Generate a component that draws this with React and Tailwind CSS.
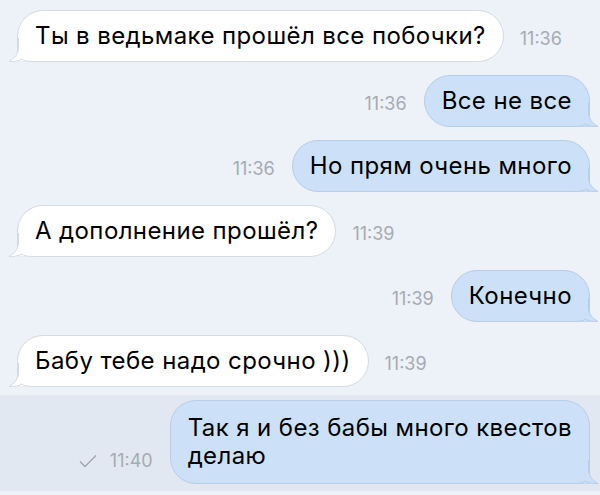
import React from "react";

const font = { fontFamily: 'Inter, "Liberation Sans", Arial, sans-serif' };

function Tail({ side }) {
    const incoming = side === "in";
    return (
        <svg
            width="30"
            height="24"
            viewBox="0 0 30 24"
            className={
                "absolute bottom-[-1px] pointer-events-none " +
                (incoming ? "left-[-10px]" : "right-[-10px] scale-x-[-1]")
            }
        >
            <path
                d="M10.5 0 L10.5 9 C10.5 16 6.5 20.5 1 23.5 L30 23.5 L30 0 Z"
                fill={incoming ? "#ffffff" : "#cce0f8"}
            />
            <path
                d="M10.5 0 L10.5 9 C10.5 16 6.5 20.5 1 23.5 C6 24 10 23 14 21 C16 23 19 23.5 30 23.5"
                fill="none"
                stroke={incoming ? "#d5dbe3" : "#b7cde8"}
                strokeWidth="1"
            />
        </svg>
    );
}

function Time({ t, check }) {
    return (
        <div className="mb-[13px] flex items-center gap-[12px] text-[18px] leading-[20px] text-[#a6abb3]">
            {check && (
                <svg width="20" height="16" viewBox="0 0 20 16">
                    <path d="M2 8.5 L7 13.5 L18 2.5" fill="none" stroke="#9fa5ad" strokeWidth="1.3" />
                </svg>
            )}
            <span>{t}</span>
        </div>
    );
}

function Incoming({ text, time }) {
    return (
        <div className="flex items-end gap-[16px] pl-[17px]">
            <div className="relative rounded-[26px] rounded-bl-none border border-[#d5dbe3] bg-white px-[17px] py-[12px] text-[24px] leading-[26px] tracking-[0.4px] text-black">
                <Tail side="in" />
                <span className="relative">{text}</span>
            </div>
            <Time t={time} />
        </div>
    );
}

function Outgoing({ lines, time, check }) {
    const multi = lines.length > 1;
    return (
        <div className="flex items-end justify-end gap-[17px] pr-[10px]">
            <Time t={time} check={check} />
            <div
                className={
                    "relative whitespace-nowrap rounded-[26px] rounded-br-none border border-[#b7cde8] bg-[#cce0f8] px-[17px] text-[24px] tracking-[0.4px] text-black " +
                    (multi ? "py-[13px] leading-[28px]" : "py-[12px] leading-[26px]")
                }
            >
                <Tail side="out" />
                {lines.map((l) => (
                    <span key={l} className="relative block">
                        {l}
                    </span>
                ))}
            </div>
        </div>
    );
}

export default function App() {
    return (
        <div className="h-[495px] w-[600px] overflow-hidden bg-[#edf1f8]" style={font}>
            <div className="flex flex-col gap-[13px] pt-[10px]">
                <Incoming text="Ты в ведьмаке прошёл все побочки?" time="11:36" />
                <Outgoing lines={["Все не все"]} time="11:36" />
                <Outgoing lines={["Но прям очень много"]} time="11:36" />
                <Incoming text="А дополнение прошёл?" time="11:39" />
                <Outgoing lines={["Конечно"]} time="11:39" />
                <Incoming text="Бабу тебе надо срочно )))" time="11:39" />
            </div>
            <div className="mt-[8px] bg-[#e2e8f1] pt-[5px] pb-[7px]">
                <Outgoing lines={["Так я и без бабы много квестов", "делаю"]} time="11:40" check />
            </div>
        </div>
    );
}
